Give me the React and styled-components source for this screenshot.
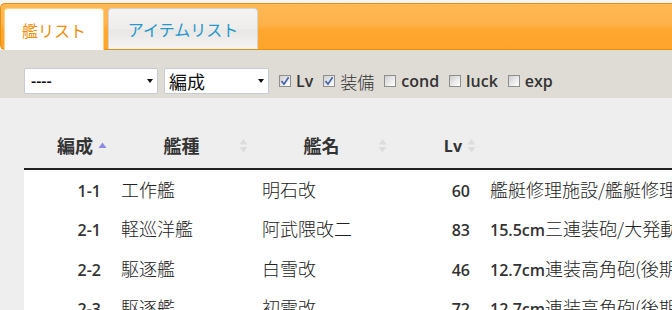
import styled, { createGlobalStyle } from "styled-components";

const GlobalStyle = createGlobalStyle`
  html, body {
    margin: 0;
    padding: 0;
    background: #eeeeee;
    overflow: hidden;
  }
  body {
    font-family: "Noto Sans CJK JP", "Open Sans", sans-serif;
    color: #333;
  }
`;

const ships = [
  { fleet: "1-1", type: "工作艦", name: "明石改", lv: 60, equip: "艦艇修理施設/艦艇修理施設/艦艇修理施設" },
  { fleet: "2-1", type: "軽巡洋艦", name: "阿武隈改二", lv: 83, equip: "15.5cm三連装砲/大発動艇/大発動艇" },
  { fleet: "2-2", type: "駆逐艦", name: "白雪改", lv: 46, equip: "12.7cm連装高角砲(後期型)/12.7cm連装高角砲(後期型)" },
  { fleet: "2-3", type: "駆逐艦", name: "初雪改", lv: 72, equip: "12.7cm連装高角砲(後期型)/12.7cm連装高角砲(後期型)" },
];

const checks = [
  { label: "Lv", on: true },
  { label: "装備", on: true },
  { label: "cond", on: false },
  { label: "luck", on: false },
  { label: "exp", on: false },
];

// latin runs are drawn in a separate, smaller face (like meiryo does)
function Mixed({ text, bold }) {
  return String(text)
    .split(/([A-Za-z0-9.\-]+)/)
    .map((part, i) =>
      /^[A-Za-z0-9.\-]+$/.test(part) ? (
        <Latin key={i} $bold={bold}>
          {part}
        </Latin>
      ) : (
        part
      )
    );
}

function SortIcon({ active }) {
  if (active) {
    return (
      <SortMark>
        <svg width="9" height="16" viewBox="0 0 9 16">
          <path d="M0.5 10 L4.5 4.5 L8.5 10 Z" fill="#8b8be3" />
        </svg>
      </SortMark>
    );
  }
  return (
    <SortMark>
      <svg width="9" height="16" viewBox="0 0 9 16">
        <path d="M0.5 6.5 L4.5 1 L8.5 6.5 Z" fill="#dcdcdc" />
        <path d="M0.5 9 L4.5 14.5 L8.5 9 Z" fill="#dcdcdc" />
      </svg>
    </SortMark>
  );
}

export default function App() {
  return (
    <>
      <GlobalStyle />
      <Header>
        <TabBar>
          <Tab $active $w={100}>艦リスト</Tab>
          <Tab $w={150}>アイテムリスト</Tab>
        </TabBar>
      </Header>

      <Toolbar>
        <Select $w={134}>
          <Latin>----</Latin>
        </Select>
        <Select $w={105}>編成</Select>
        {checks.map((c) => (
          <CheckItem key={c.label}>
            <Box>
              {c.on && (
                <svg width="10" height="10" viewBox="0 0 10 10">
                  <path d="M1.5 5 L4 8.2 L8.6 1.2" stroke="#3f5fa8" strokeWidth="1.6" fill="none" />
                </svg>
              )}
            </Box>
            <Mixed text={c.label} />
          </CheckItem>
        ))}
      </Toolbar>

      <Content>
        <Table>
          <colgroup>
            <col style={{ width: 87 }} />
            <col style={{ width: 141 }} />
            <col style={{ width: 139 }} />
            <col style={{ width: 89 }} />
            <col style={{ width: 444 }} />
          </colgroup>
          <thead>
            <tr>
              <Th $align="right">
                編成
                <SortIcon active />
              </Th>
              <Th $align="center">
                艦種
                <SortIcon />
              </Th>
              <Th $align="center">
                艦名
                <SortIcon />
              </Th>
              <Th $align="right">
                <Mixed text="Lv" bold />
                <SortIcon />
              </Th>
              <Th $align="left" />
            </tr>
          </thead>
          <tbody>
            {ships.map((s) => (
              <tr key={s.fleet}>
                <Td $align="right">
                  <Mixed text={s.fleet} />
                </Td>
                <Td>{s.type}</Td>
                <Td>{s.name}</Td>
                <Td $align="right">
                  <Mixed text={s.lv} />
                </Td>
                <Td>
                  <Mixed text={s.equip} />
                </Td>
              </tr>
            ))}
          </tbody>
        </Table>
      </Content>
    </>
  );
}

const Latin = styled.span`
  font-family: "Open Sans", sans-serif;
  font-size: 16px;
  font-weight: ${(p) => (p.$bold ? 700 : 600)};
  color: #333;
`;

const Header = styled.div`
  padding-top: 3px;
  background: #f6f6f6;
`;

const TabBar = styled.div`
  display: flex;
  align-items: flex-end;
  gap: 4px;
  height: 47px;
  box-sizing: border-box;
  padding-left: 3px;
  border: 1px solid #e5900f;
  border-right: none;
  border-radius: 5px 0 0 5px;
  background: linear-gradient(
    to bottom,
    #ffb956 0%,
    #ffb24a 45%,
    #ffa730 58%,
    #ffa42b 100%
  );
`;

const Tab = styled.div`
  box-sizing: border-box;
  width: ${(p) => p.$w}px;
  height: ${(p) => (p.$active ? 42 : 41)}px;
  margin-bottom: ${(p) => (p.$active ? -1 : 0)}px;
  display: flex;
  align-items: center;
  justify-content: center;
  border: 1px solid ${(p) => (p.$active ? "#ffd27e" : "#d4d4d4")};
  border-bottom: none;
  border-radius: 4px 4px 0 0;
  background: ${(p) =>
    p.$active
      ? "#fff"
      : "linear-gradient(to bottom, #f4f3f1 0%, #eeedeb 50%, #e8e7e5 52%, #f5f4f2 100%)"};
  color: ${(p) => (p.$active ? "#ef8e09" : "#2497cb")};
  font-size: 16px;
  font-weight: 400;
`;

const Toolbar = styled.div`
  display: flex;
  align-items: center;
  height: 48px;
  box-sizing: border-box;
  padding: 18px 0 4px 24px;
  background: #dfdcd6;
`;

const Select = styled.div`
  box-sizing: border-box;
  width: ${(p) => p.$w}px;
  height: 26px;
  margin-right: 6px;
  display: flex;
  align-items: center;
  justify-content: space-between;
  padding: 0 4px 0 4px;
  background: #fff;
  border: 1px solid #c7cbd4;
  border-radius: 2px;
  font-size: 18px;
  font-weight: 400;
  color: #111;

  & > span {
    color: #111;
    padding-left: 2px;
  }

  &::after {
    content: "";
    border-left: 3px solid transparent;
    border-right: 3px solid transparent;
    border-top: 4px solid #111;
  }
`;

const CheckItem = styled.label`
  display: flex;
  align-items: center;
  gap: 5px;
  margin-left: 4px;
  margin-right: 6px;
  font-size: 17px;
  font-weight: 300;
  color: #333;
`;

const Box = styled.span`
  box-sizing: border-box;
  width: 12px;
  height: 12px;
  display: flex;
  align-items: center;
  justify-content: center;
  border: 1px solid #8e8e8e;
  background: linear-gradient(135deg, #cfcfcf 0%, #f2f2f2 70%, #ffffff 100%);
`;

const Content = styled.div`
  padding: 23px 0 0 24px;
`;

const Table = styled.table`
  border-collapse: collapse;
  table-layout: fixed;
  width: 900px;
`;

const Th = styled.th`
  position: relative;
  padding: ${(p) => (p.$align === "right" ? "10px 18px 9px 10px" : "10px 10px 9px 10px")};
  line-height: 26px;
  text-align: ${(p) => p.$align};
  font-size: 18px;
  font-weight: 700;
  color: #333;
  border-bottom: 2px solid #222;
  white-space: nowrap;
`;

const SortMark = styled.span`
  position: absolute;
  right: 4px;
  top: 50%;
  margin-top: -7px;
  display: flex;
`;

const Td = styled.td`
  height: 39.5px;
  box-sizing: border-box;
  padding: 0 10px;
  text-align: ${(p) => p.$align || "left"};
  vertical-align: middle;
  background: #fff;
  font-size: 18px;
  font-weight: 300;
  color: #222;
  white-space: nowrap;
  overflow: hidden;
`;
